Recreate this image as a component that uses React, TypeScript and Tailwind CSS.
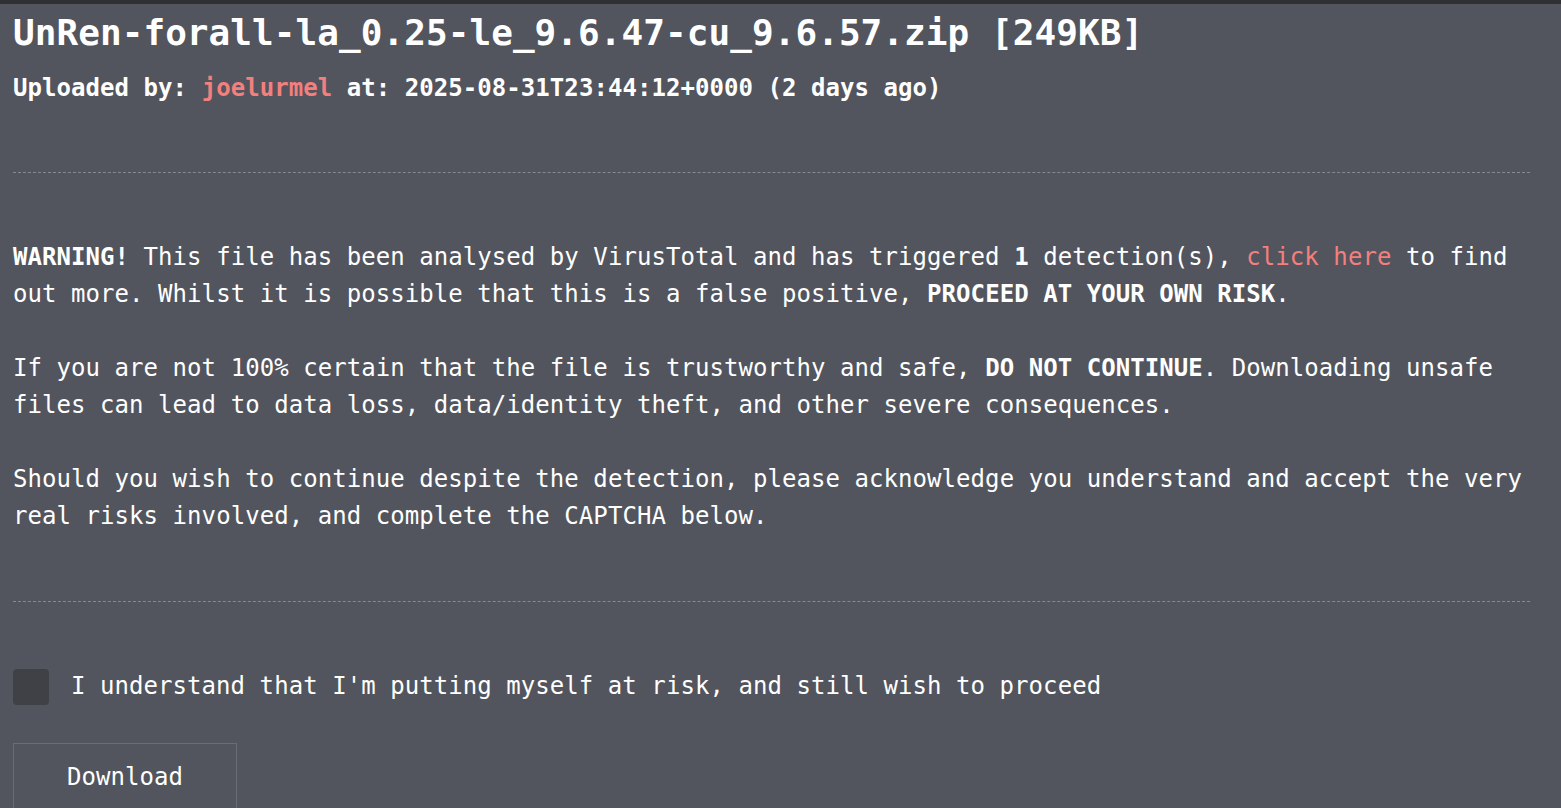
export default function App() {
  const mono = { fontFamily: '"DejaVu Sans Mono", "Liberation Mono", monospace' };
  return (
    <div
      className="min-h-[808px] bg-[#52555d] text-white overflow-hidden tracking-[0.06px]"
      style={mono}
    >
      <div className="h-[4px] bg-[#2e3034]" />
      <div className="w-[1517px] ml-[13px]">
        <header className="pt-[7px] pb-[65px] border-b border-dashed border-[#868990]">
          <h1 className="text-[36px] leading-[44px] font-bold">
            UnRen-forall-la_0.25-le_9.6.47-cu_9.6.57.zip [249KB]
          </h1>
          <p className="mt-[15px] text-[24px] leading-[37px] font-bold">
            Uploaded by: <span className="text-[#f47f7d]">joelurmel</span> at:
            2025-08-31T23:44:12+0000 (2 days ago)
          </p>
        </header>

        <section className="pt-[66px] pb-[66px] border-b border-dashed border-[#868990] text-[24px] leading-[37px] flex flex-col gap-[37px]">
          <p>
            <b>WARNING!</b> This file has been analysed by VirusTotal and has triggered{" "}
            <b>1</b> detection(s), <a className="text-[#f47f7d]">click here</a> to find out
            more. Whilst it is possible that this is a false positive,{" "}
            <b>PROCEED AT YOUR OWN RISK</b>.
          </p>
          <p>
            If you are not 100% certain that the file is trustworthy and safe,{" "}
            <b>DO NOT CONTINUE</b>. Downloading unsafe files can lead to data loss,
            data/identity theft, and other severe consequences.
          </p>
          <p>
            Should you wish to continue despite the detection, please acknowledge you
            understand and accept the very real risks involved, and complete the CAPTCHA
            below.
          </p>
        </section>

        <section className="pt-[66px] text-[24px] leading-[37px]">
          <label className="flex items-center gap-[22px]">
            <span className="w-[36px] h-[36px] rounded-[4px] bg-[#404147] shrink-0" />
            <span>I understand that I'm putting myself at risk, and still wish to proceed</span>
          </label>
          <button
            className="mt-[38px] w-[224px] px-[53px] py-[15px] border border-[#6a6d74] text-left leading-[37px] tracking-[0.06px]"
            style={mono}
          >
            Download
          </button>
        </section>
      </div>
    </div>
  );
}
